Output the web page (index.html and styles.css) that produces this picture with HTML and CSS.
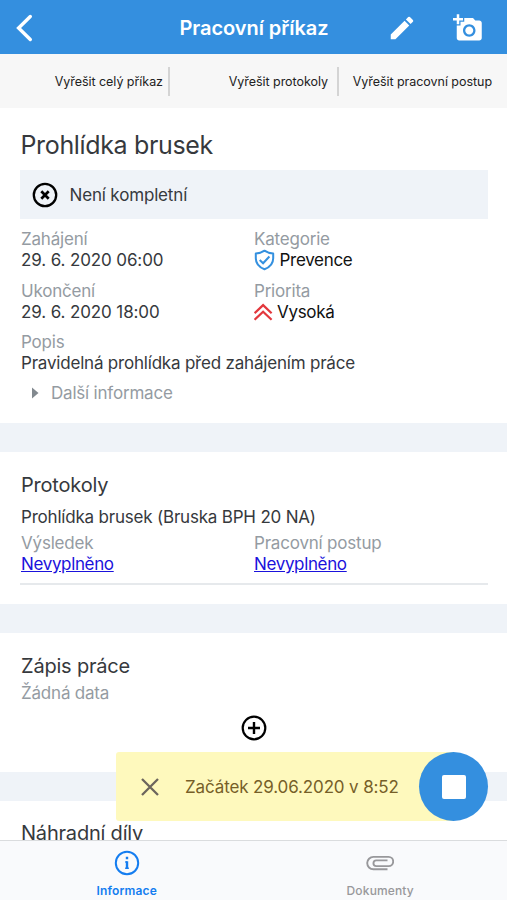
FILE: index.html
```html
<!DOCTYPE html>
<html lang="cs">
<head>
<meta charset="utf-8">
<title>Pracovní příkaz</title>
<link rel="stylesheet" href="styles.css">
</head>
<body>
<div class="app">
  <header class="header">
    <svg class="back" width="20" height="32" viewBox="0 0 20 32" fill="none" stroke="#fff" stroke-width="3.400"><path d="M16.300 4.500 4.600 16l11.700 11.500" stroke-linecap="round"/></svg>
    <h1 class="header-title"><span>Pracovní příkaz</span></h1>
    <svg class="pencil" width="30" height="30" viewBox="0 0 24 24" fill="#fff"><path d="M3 17.250V21h3.750L17.810 9.940l-3.750-3.750L3 17.250zM20.710 7.040a1 1 0 0 0 0-1.410l-2.340-2.340a1 1 0 0 0-1.410 0l-1.830 1.830 3.750 3.750 1.830-1.830z"/></svg>
    <svg class="camera" width="30" height="30" viewBox="0 0 24 24" fill="#fff"><path d="M3 4V1h2v3h3v2H5v3H3V6H0V4h3zm3 6V7h3V4h7l1.830 2H21c1.100 0 2 .9 2 2v12c0 1.100-.9 2-2 2H5c-1.100 0-2-.9-2-2V10h3zm7 9c2.760 0 5-2.240 5-5s-2.240-5-5-5-5 2.240-5 5 2.240 5 5 5zm-3.200-5c0 1.770 1.430 3.200 3.200 3.200s3.200-1.430 3.200-3.200-1.430-3.200-3.200-3.200-3.200 1.430-3.200 3.200z"/></svg>
  </header>
  <nav class="actions">
    <div class="action action-order"><span>Vyřešit celý příkaz</span></div>
    <div class="action action-protocols"><span>Vyřešit protokoly</span></div>
    <div class="action action-procedure"><span>Vyřešit pracovní postup</span></div>
  </nav>
  <main class="content">
    <section class="card summary">
      <h2 class="title"><span>Prohlídka brusek</span></h2>
      <div class="status">
        <svg width="26" height="26" viewBox="0 0 26 26" fill="none" stroke="#000"><circle cx="13" cy="13" r="11.200" stroke-width="2.300"/><path d="m9.300 9.300 7.400 7.400m0-7.400-7.400 7.400" stroke-width="2.700"/></svg>
        <span>Není kompletní</span>
      </div>
      <div class="fields">
        <div class="field"><div class="label"><span>Zahájení</span></div><div class="value"><span class="date">29. 6. 2020 06:00</span></div></div>
        <div class="field"><div class="label"><span>Kategorie</span></div><div class="value dark">
          <svg class="shield" width="21" height="22" viewBox="0 0 21 22" fill="none" stroke="#3490df" stroke-width="2"><path d="M10.500 1.700c2.700 1.800 5.300 2.700 8.700 2.900v4.700c0 5.200-3.500 9-8.700 11-5.200-2-8.700-5.800-8.700-11V4.600c3.400-.2 6-1.100 8.700-2.900z" stroke-linejoin="round"/><path d="m5.700 11 3.400 3.300 6.300-6.800"/></svg><span>Prevence</span></div></div>
        <div class="field"><div class="label"><span>Ukončení</span></div><div class="value"><span class="date">29. 6. 2020 18:00</span></div></div>
        <div class="field"><div class="label"><span>Priorita</span></div><div class="value dark">
          <svg class="chevrons" width="19" height="18" viewBox="0 0 19 18" fill="none" stroke="#e3383d" stroke-width="2.200"><path d="m.6 10.200 8.500-8.100 8.500 8.100M.6 16.800l8.500-8.100 8.500 8.100"/></svg><span>Vysoká</span></div></div>
        <div class="field wide"><div class="label"><span>Popis</span></div><div class="value"><span>Pravidelná prohlídka před zahájením práce</span></div></div>
      </div>
      <div class="more"><svg width="7" height="12" viewBox="0 0 7 12" fill="#82898f"><path d="M0 .5 6.500 6 0 11.500z"/></svg><span>Další informace</span></div>
    </section>
    <section class="card protocols">
      <h3 class="heading"><span>Protokoly</span></h3>
      <p class="protocol-name"><span>Prohlídka brusek (Bruska BPH 20 NA)</span></p>
      <div class="fields results">
        <div class="field"><div class="label"><span>Výsledek</span></div><div class="value"><a href="#">Nevyplněno</a></div></div>
        <div class="field"><div class="label"><span>Pracovní postup</span></div><div class="value"><a href="#">Nevyplněno</a></div></div>
      </div>
    </section>
    <section class="card worklog">
      <h3 class="heading"><span>Zápis práce</span></h3>
      <p class="empty"><span>Žádná data</span></p>
      <svg class="add" width="26" height="26" viewBox="0 0 26 26" fill="none" stroke="#000"><circle cx="13" cy="13" r="11.300" stroke-width="2.200"/><path d="M13 7v12M7 13h12" stroke-width="2.400"/></svg>
    </section>
    <section class="card parts">
      <h3 class="heading"><span>Náhradní díly</span></h3>
    </section>
  </main>
  <footer class="tabs">
    <div class="tab active">
      <svg width="26" height="26" viewBox="0 0 26 26" fill="none" stroke="#147df0"><circle cx="13" cy="13" r="11.200" stroke-width="2"/><path d="M13 11.200V19M13 6.800v2.400" stroke-width="2.400"/><path d="M11.200 12H13M11.200 18.300h3.600" stroke-width="1.400"/></svg>
      <span>Informace</span>
    </div>
    <div class="tab">
      <svg width="28" height="26" viewBox="0 0 28 26" fill="none" stroke="#98989b" stroke-width="1.900"><path d="M21.500 19.300H7.400a6.200 6.200 0 0 1 0-12.400h15.200a4.500 4.500 0 0 1 0 9.200H10.300a2.850 2.850 0 0 1 0-5.700H21.500"/></svg>
      <span>Dokumenty</span>
    </div>
  </footer>
  <div class="timer">
    <svg class="close" width="18" height="18" viewBox="0 0 18 18" fill="none" stroke="#6c655d" stroke-width="2.300"><path d="m1 1 16 16M17 1 1 17"/></svg>
    <span class="timer-text">Začátek 29.06.2020 v 8:52</span>
    <div class="stop"><div class="stop-icon"></div></div>
  </div>
</div>
</body>
</html>
```
FILE: styles.css
```css
* { box-sizing: border-box; }
body, h1, h2, h3, p { margin: 0; font-weight: 400; }
body { font-family: Inter, "Liberation Sans", sans-serif; font-size: 17px; letter-spacing: -0.200px; color: #36393d; background: #fff; }
svg { display: block; flex: none; }
.app { position: relative; height: 900px; overflow: hidden; display: flex; flex-direction: column; }

.header { height: 54px; flex: none; background: #348fdf; display: grid; grid-template-columns: 120px 1fr 66px 54px; align-items: center; color: #fff; letter-spacing: 0; }
.back { margin-left: 14px; }
.header-title { text-align: center; font-size: 20px; font-weight: 600; line-height: 54px; padding: 1px 0 0 1px; letter-spacing: -0.050px; }
.camera { margin-top: 1px; }

.actions { height: 54px; flex: none; background: #f7f7f7; display: grid; grid-template-columns: 170px 169px 168px; align-items: center; font-size: 12.500px; color: #222; letter-spacing: -0.040px; }
.action { height: 29px; line-height: 30px; text-align: right; white-space: nowrap; }
.action-order, .action-protocols { border-right: 2px solid #d4d4d4; }
.action-order { padding-right: 5px; }
.action-protocols { padding-right: 9px; }
.action-procedure { padding-right: 15px; }

.content { flex: 1; min-height: 0; overflow: hidden; background: #eff3f8; display: flex; flex-direction: column; gap: 29px; }
.card { background: #fff; flex: none; padding: 0 19px 0 20px; }
.summary { height: 315px; padding-top: 19px; }
.title { font-size: 25px; line-height: 36px; letter-spacing: -0.350px; padding-left: 0.500px; }
.status { margin-top: 7px; height: 49px; background: #eff3f8; display: flex; align-items: center; gap: 11.500px; padding-left: 12px; letter-spacing: -0.160px; }
.fields { display: grid; grid-template-columns: 233px 1fr; row-gap: 9.500px; margin-top: 10px; padding-left: 1px; }
.wide { grid-column: 1 / 3; }
.label { line-height: 21px; color: #949ba2; letter-spacing: -0.200px; }
.value { line-height: 21px; height: 21px; display: flex; align-items: center; white-space: nowrap; }
.date { letter-spacing: -0.120px; }
.dark { color: #111; letter-spacing: -0.300px; }
.shield { margin: -2px 4.500px 0 0; }
.chevrons { margin-right: 4px; }
.more { display: flex; align-items: center; gap: 12px; line-height: 22px; margin-top: 8px; padding-left: 12px; color: #949ba2; }

.heading { font-size: 20px; line-height: 28px; padding-left: 1px; }
.protocols { height: 152px; padding-top: 19px; }
.protocol-name { line-height: 22px; margin-top: 7px; padding-left: 1px; }
.results { margin-top: 5px; padding: 0 0 8px 1px; border-bottom: 2px solid #e6e9ec; }
.value a { color: #1a12dc; letter-spacing: -0.350px; }
.worklog { height: 139px; padding-top: 19px; }
.empty { line-height: 22px; margin-top: 2px; padding-left: 1px; color: #949ba2; }
.add { margin: 11px auto 0; }
.parts { height: 60px; padding-top: 18px; }

.tabs { height: 60px; flex: none; background: #f9fafc; border-top: 1px solid #dadcde; display: grid; grid-template-columns: 1fr 1fr; font-size: 12px; font-weight: 500; letter-spacing: 0.150px; color: #98989b; }
.tab { display: flex; flex-direction: column; align-items: center; padding-top: 9px; line-height: 16px; gap: 7px; }
.active { color: #147df0; font-weight: 600; }

.timer { position: absolute; left: 116px; top: 752px; width: 372px; height: 69px; background: linear-gradient(to right, #fef9bd 337px, transparent 337px); display: flex; align-items: center; border-radius: 3px; color: #765f28; letter-spacing: -0.130px; }
.close { margin-left: 25px; }
.timer-text { margin-left: 26px; white-space: nowrap; }
.stop { margin-left: auto; width: 69px; height: 69px; border-radius: 50%; background: #348fdf; display: flex; align-items: center; justify-content: center; }
.stop-icon { width: 24px; height: 24px; background: #fff; border-radius: 2px; }
```
